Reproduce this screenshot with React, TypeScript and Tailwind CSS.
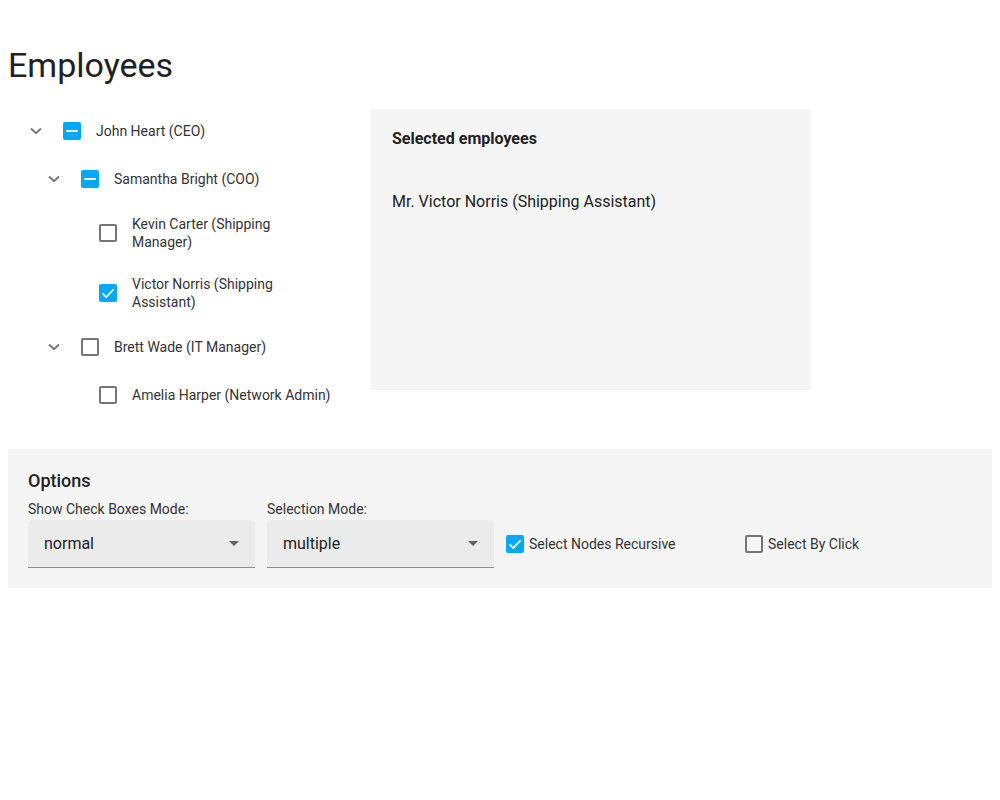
import React from "react";

// ─── Data ─────────────────────────────────────────────────────────────────────

type Check = "on" | "off" | "some";

type Row = {
  label: string;
  level: number;
  expandable: boolean;
  check: Check;
};

const ROWS: Row[] = [
  { label: "John Heart (CEO)", level: 0, expandable: true, check: "some" },
  { label: "Samantha Bright (COO)", level: 1, expandable: true, check: "some" },
  { label: "Kevin Carter (Shipping Manager)", level: 2, expandable: false, check: "off" },
  { label: "Victor Norris (Shipping Assistant)", level: 2, expandable: false, check: "on" },
  { label: "Brett Wade (IT Manager)", level: 1, expandable: true, check: "off" },
  { label: "Amelia Harper (Network Admin)", level: 2, expandable: false, check: "off" },
];

// ─── Bits ─────────────────────────────────────────────────────────────────────

function Box({ state }: { state: Check }) {
  if (state === "off") {
    return <span className="block w-[18px] h-[18px] shrink-0 rounded-[2px] border-2 border-[#757575]" />;
  }
  return (
    <span className="flex w-[18px] h-[18px] shrink-0 items-center justify-center rounded-[2px] bg-[#03a9f4]">
      {state === "some" ? (
        <span className="block w-[12px] h-[2px] bg-white" />
      ) : (
        <svg width="18" height="18" viewBox="0 0 18 18">
          <path d="M3.6 9.4 L7.2 13 L14.6 5.4" fill="none" stroke="#fff" strokeWidth="1.6" />
        </svg>
      )}
    </span>
  );
}

function Chevron() {
  return (
    <svg width="12" height="8" viewBox="0 0 12 8">
      <path d="M1 1.5 L6 6.2 L11 1.5" fill="none" stroke="#757575" strokeWidth="1.8" />
    </svg>
  );
}

function Caret() {
  return (
    <svg width="10" height="5" viewBox="0 0 10 5">
      <path d="M0 0 L10 0 L5 5 Z" fill="#616161" />
    </svg>
  );
}

function Select({ label, value }: { label: string; value: string }) {
  return (
    <div className="w-[227px]">
      <div className="mb-[2px] text-[14px] leading-[18px] text-[#333]">{label}</div>
      <div className="flex h-[48px] items-center justify-between rounded-t-[4px] border-b border-[#8c8c8c] bg-[#ebebeb] pl-[16px] pr-[16px]">
        <span className="text-[16px] text-[#212121]">{value}</span>
        <Caret />
      </div>
    </div>
  );
}

function Toggle({ state, label, width }: { state: Check; label: string; width?: string }) {
  return (
    <div className={width}>
      <div className="h-[20px]" />
      <label className="flex h-[48px] items-center gap-[5px] text-[14px] text-[#333]">
        <Box state={state} />
        {label}
      </label>
    </div>
  );
}

// ─── Page ─────────────────────────────────────────────────────────────────────

export default function App() {
  return (
    <div className="min-h-[800px] bg-white p-2 font-['Roboto',sans-serif] text-[#212121]">
      <h1 className="mt-[37px] text-[34px] leading-[40px] font-normal">Employees</h1>

      <div className="mt-[22px] flex items-start">
        {/* Tree */}
        <div className="w-[340px]">
          {ROWS.map((r) => (
            <div
              key={r.label}
              className="flex min-h-[48px] items-center py-[12px]"
              style={{ paddingLeft: r.level * 18 }}
            >
              <span className="ml-[19px] flex w-[18px] shrink-0 justify-center">
                {r.expandable && <Chevron />}
              </span>
              <span className="ml-[18px]">
                <Box state={r.check} />
              </span>
              <span className="ml-[15px] max-w-[200px] text-[14px] leading-[18px] text-[#333]">
                {r.label}
              </span>
            </div>
          ))}
        </div>

        {/* Selected */}
        <div className="mt-[2px] ml-[23px] h-[281px] w-[440px] bg-[#f5f5f5] p-[21px]">
          <div className="text-[16px] leading-[18px] font-bold text-[#212121]">Selected employees</div>
          <div className="mt-[45px] text-[16px] leading-[18px] text-[#212121]">
            Mr. Victor Norris (Shipping Assistant)
          </div>
        </div>
      </div>

      {/* Options */}
      <div className="mt-[30px] bg-[#f5f5f5] px-[20px] pt-[20px] pb-[20px]">
        <div className="text-[18px] leading-[24px] font-medium text-[#212121]">Options</div>
        <div className="mt-[7px] flex items-start gap-[12px]">
          <Select label="Show Check Boxes Mode:" value="normal" />
          <Select label="Selection Mode:" value="multiple" />
          <Toggle state="on" label="Select Nodes Recursive" width="w-[227px]" />
          <Toggle state="off" label="Select By Click" />
        </div>
      </div>
    </div>
  );
}
